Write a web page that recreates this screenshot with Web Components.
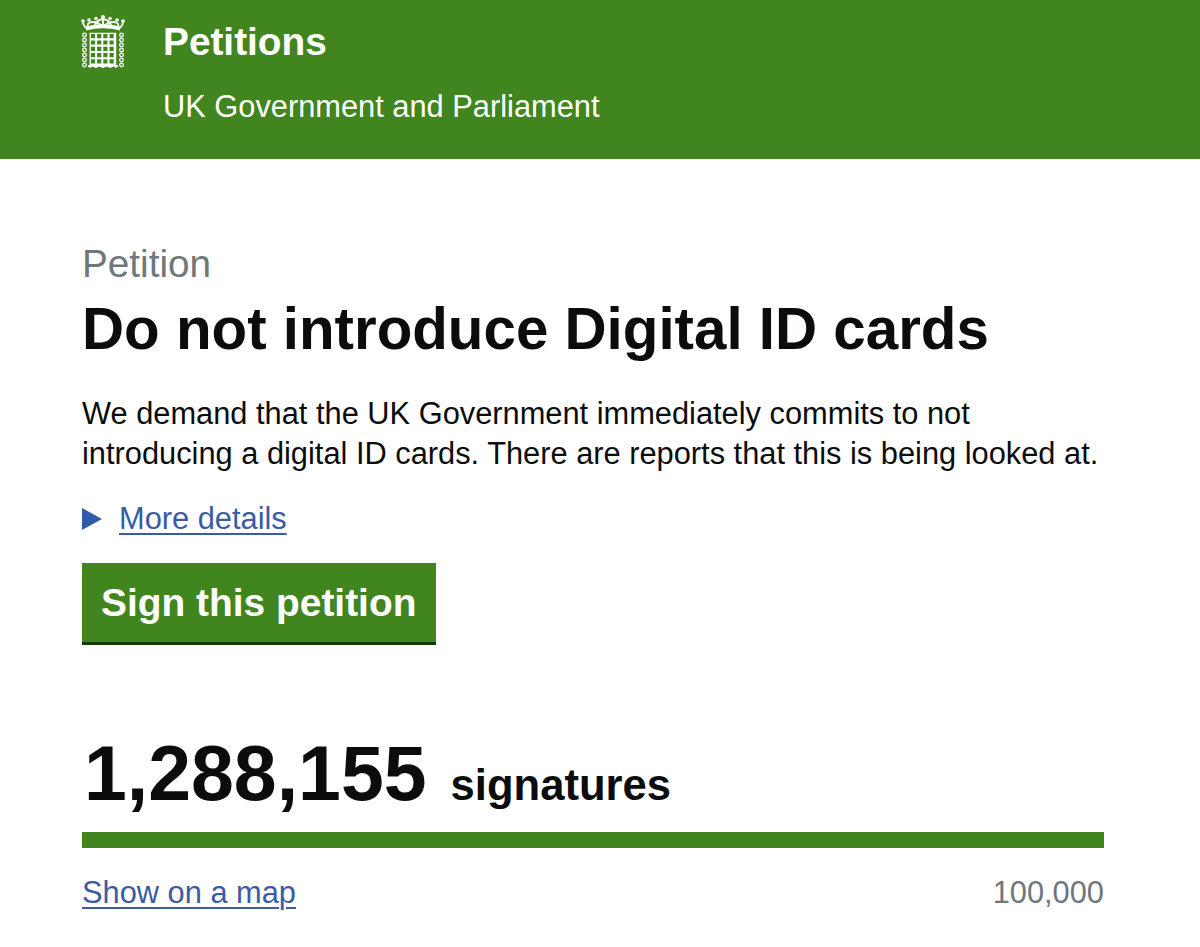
<!DOCTYPE html>
<html lang="en">
<head>
<meta charset="utf-8">
<title>Petitions</title>
<style>
  html, body { margin: 0; background: #fff; }
  body { font-family: "Liberation Sans", Arial, sans-serif; color: #0b0c0c; }
</style>
</head>
<body>
<petition-page>
  <site-header title="Petitions" subtitle="UK Government and Parliament"></site-header>
  <petition-main></petition-main>
</petition-page>

<script>
class PetitionPage extends HTMLElement {
    constructor() {
        super();
        this.attachShadow({mode: "open"}).innerHTML = `
<style>
    :host { display: block; width: 1200px; height: 947px; overflow: hidden; }
</style>
<slot></slot>`;
    }
}

class SiteHeader extends HTMLElement {
    constructor() {
        super();
        this.attachShadow({mode: "open"});
    }

    crest() {
        // portcullis: white lattice with green holes, 4 across and 5 down
        let holes = "";
        for (let c = 0; c < 4; c++) {
            for (let r = 0; r < 5; r++) {
                const x = 9.9 + c * 6.2, y = 19.1 + r * 6.3;
                holes += `M${x} ${y}h4.2v4.2h-4.2z`;
            }
        }
        // chains either side
        let links = "";
        for (let r = 0; r < 7; r++) {
            links += `<circle cx="3.5" cy="${20 + r * 5}" r="1.8"/><circle cx="40.5" cy="${20 + r * 5}" r="1.8"/>`;
        }
        return `
<svg viewBox="0 0 44 53" fill="#fff">
    <g fill="none" stroke="#fff" stroke-width="1.9">
        <path d="M5 13 Q2 10 2 7 M39 13 Q42 10 42 7"/>
        <path d="M7 13 Q5 7 12 7 Q17 7 22 12 Q27 7 32 7 Q39 7 37 13"/>
        <path d="M14 11 Q15 5 22 4 Q29 5 30 11"/>
        <path d="M22 4 V11"/>
        <g stroke-width="1.3">${links}</g>
    </g>
    <circle cx="2" cy="6" r="1.8"/><circle cx="8" cy="5" r="1.8"/><circle cx="15" cy="3.5" r="1.8"/>
    <circle cx="22" cy="2" r="2"/><circle cx="29" cy="3.5" r="1.8"/><circle cx="36" cy="5" r="1.8"/><circle cx="42" cy="6" r="1.8"/>
    <path d="M5 11.5 Q22 7 39 11.5 V15.5 Q22 11 5 15.5Z"/>
    <path fill-rule="evenodd" d="M8.6 17.8H35.2V50.6H8.6Z${holes}"/>
    <path d="M7 50 H37 V51.5 L35 53 L33 51.5 L29 53 L26 51.5 L22 53 L18 51.5 L15 53 L11 51.5 L9 53 L7 51.5Z"/>
</svg>`;
    }

    connectedCallback() {
        this.shadowRoot.innerHTML = `
<style>
    :host { display: block; height: 159px; background: #41851f; color: #fff; }
    .inner { display: flex; padding: 15px 0 0 81px; }
    svg { width: 44px; height: 53px; flex: none; }
    .text { margin-left: 38px; }
    .title { font-size: 38.8px; line-height: 44px; font-weight: 700; margin-top: 5px; }
    .sub { font-size: 30.8px; line-height: 36px; margin-top: 25px; }
</style>
<div class="inner">
    ${this.crest()}
    <div class="text">
        <div class="title">${this.getAttribute("title")}</div>
        <div class="sub">${this.getAttribute("subtitle")}</div>
    </div>
</div>`;
    }
}

class PetitionMain extends HTMLElement {
    constructor() {
        super();
        this.attachShadow({mode: "open"}).innerHTML = `
<style>
    :host { display: block; padding: 84px 96px 0 82px; }
    a { color: #3b5ba5; text-decoration: underline; text-underline-offset: 4px; text-decoration-thickness: 2px; }
    .kicker { font-size: 38.7px; line-height: 42px; color: #6f777b; }
    h1 { font-size: 58.3px; line-height: 66px; font-weight: 700; margin: 0; padding-top: 11px; }
    p { font-size: 30.8px; line-height: 40px; margin: 32px 0 0; }
    .details { display: flex; align-items: center; margin-top: 25px; font-size: 30.8px; line-height: 40px; }
    .arrow { width: 0; height: 0; border-style: solid; border-width: 11px 0 11px 20px; border-color: transparent transparent transparent #2f5ca8; margin-right: 17px; }
    .sign { display: inline-block; margin-top: 24px; padding: 16px 20px 15px 19px; background: #41851f; color: #fff; border-bottom: 3px solid #123b05; font-size: 38.9px; line-height: 48px; font-weight: 700; }
    .count { display: flex; align-items: baseline; margin-top: 85px; line-height: 86px; font-weight: 700; }
    .count b { font-size: 77px; margin-left: 2px; }
    .count span { font-size: 43.6px; margin-left: 24px; }
    .bar { height: 16px; background: #41851f; margin-top: 4px; width: 1022px; }
    .foot { display: flex; justify-content: space-between; width: 1022px; font-size: 30.8px; line-height: 40px; margin-top: 25px; }
    .foot span { color: #6f777b; }
</style>
<div class="kicker">Petition</div>
<h1>Do not introduce Digital ID cards</h1>
<p>We demand that the UK Government immediately commits to not<br>introducing a digital ID cards. There are reports that this is being looked at.</p>
<div class="details"><i class="arrow"></i><a>More details</a></div>
<div class="sign">Sign this petition</div>
<div class="count"><b>1,288,155</b><span>signatures</span></div>
<div class="bar"></div>
<div class="foot"><a>Show on a map</a><span>100,000</span></div>`;
    }
}

customElements.define("petition-page", PetitionPage);
customElements.define("site-header", SiteHeader);
customElements.define("petition-main", PetitionMain);
</script>
</body>
</html>
